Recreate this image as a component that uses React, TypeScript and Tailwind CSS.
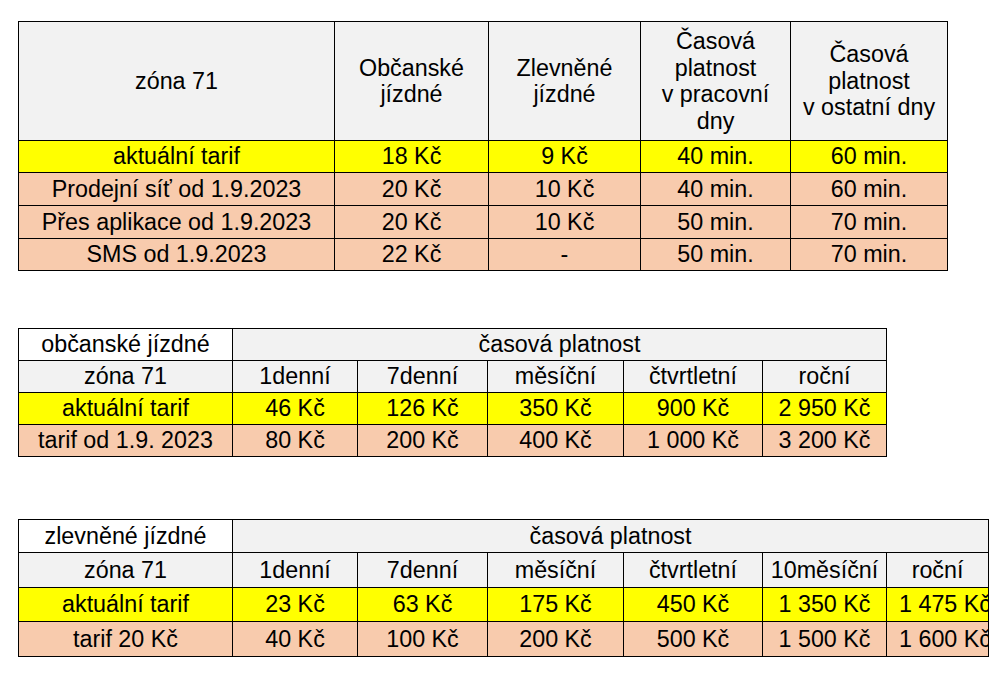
import React from "react";

const Y = "bg-[#ffff00]";
const P = "bg-[#f8cbad]";
const G = "bg-[#f2f2f2]";
const W = "bg-white";

const td = "border border-black text-center align-middle p-0 whitespace-nowrap";

export default function App() {
  return (
    <div
      className="w-[1000px] h-[692px] bg-white text-black text-[23.3px] leading-[26.5px] pl-[18px] pt-[21px]"
      style={{ fontFamily: '"Liberation Sans", Arial, sans-serif' }}
    >
      <table className="table-fixed border-collapse w-[929px]">
        <colgroup>
          <col className="w-[316px]" />
          <col className="w-[154px]" />
          <col className="w-[152px]" />
          <col className="w-[150px]" />
          <col className="w-[157px]" />
        </colgroup>
        <tbody>
          <tr className={`h-[119px] ${G}`}>
            <td className={td}>zóna 71</td>
            <td className={td}>
              Občanské
              <br />
              jízdné
            </td>
            <td className={td}>
              Zlevněné
              <br />
              jízdné
            </td>
            <td className={td}>
              Časová
              <br />
              platnost
              <br />v pracovní
              <br />
              dny
            </td>
            <td className={td}>
              Časová
              <br />
              platnost
              <br />v ostatní dny
            </td>
          </tr>
          <tr className={`h-[32px] ${Y}`}>
            <td className={td}>aktuální tarif</td>
            <td className={td}>18 Kč</td>
            <td className={td}>9 Kč</td>
            <td className={td}>40 min.</td>
            <td className={td}>60 min.</td>
          </tr>
          <tr className={`h-[33px] ${P}`}>
            <td className={td}>Prodejní síť od 1.9.2023</td>
            <td className={td}>20 Kč</td>
            <td className={td}>10 Kč</td>
            <td className={td}>40 min.</td>
            <td className={td}>60 min.</td>
          </tr>
          <tr className={`h-[33px] ${P}`}>
            <td className={td}>Přes aplikace od 1.9.2023</td>
            <td className={td}>20 Kč</td>
            <td className={td}>10 Kč</td>
            <td className={td}>50 min.</td>
            <td className={td}>70 min.</td>
          </tr>
          <tr className={`h-[32px] ${P}`}>
            <td className={td}>SMS od 1.9.2023</td>
            <td className={td}>22 Kč</td>
            <td className={td}>-</td>
            <td className={td}>50 min.</td>
            <td className={td}>70 min.</td>
          </tr>
        </tbody>
      </table>

      <table className="table-fixed border-collapse w-[868px] mt-[57px]">
        <colgroup>
          <col className="w-[214px]" />
          <col className="w-[125px]" />
          <col className="w-[130px]" />
          <col className="w-[136px]" />
          <col className="w-[139px]" />
          <col className="w-[124px]" />
        </colgroup>
        <tbody>
          <tr className="h-[32px]">
            <td className={`${td} ${W}`}>občanské jízdné</td>
            <td className={`${td} ${G}`} colSpan={5}>
              časová platnost
            </td>
          </tr>
          <tr className={`h-[32px] ${G}`}>
            <td className={td}>zóna 71</td>
            <td className={td}>1denní</td>
            <td className={td}>7denní</td>
            <td className={td}>měsíční</td>
            <td className={td}>čtvrtletní</td>
            <td className={td}>roční</td>
          </tr>
          <tr className={`h-[32px] ${Y}`}>
            <td className={td}>aktuální tarif</td>
            <td className={td}>46 Kč</td>
            <td className={td}>126 Kč</td>
            <td className={td}>350 Kč</td>
            <td className={td}>900 Kč</td>
            <td className={td}>2 950 Kč</td>
          </tr>
          <tr className={`h-[32px] ${P}`}>
            <td className={td}>tarif od 1.9. 2023</td>
            <td className={td}>80 Kč</td>
            <td className={td}>200 Kč</td>
            <td className={td}>400 Kč</td>
            <td className={td}>1 000 Kč</td>
            <td className={td}>3 200 Kč</td>
          </tr>
        </tbody>
      </table>

      <table className="table-fixed border-collapse w-[970px] mt-[62px]">
        <colgroup>
          <col className="w-[214px]" />
          <col className="w-[125px]" />
          <col className="w-[130px]" />
          <col className="w-[136px]" />
          <col className="w-[139px]" />
          <col className="w-[124px]" />
          <col className="w-[102px]" />
        </colgroup>
        <tbody>
          <tr className="h-[33px]">
            <td className={`${td} ${W}`}>zlevněné jízdné</td>
            <td className={`${td} ${G}`} colSpan={6}>
              časová platnost
            </td>
          </tr>
          <tr className={`h-[35px] ${G}`}>
            <td className={td}>zóna 71</td>
            <td className={td}>1denní</td>
            <td className={td}>7denní</td>
            <td className={td}>měsíční</td>
            <td className={td}>čtvrtletní</td>
            <td className={td}>10měsíční</td>
            <td className={td}>roční</td>
          </tr>
          <tr className={`h-[34px] ${Y}`}>
            <td className={td}>aktuální tarif</td>
            <td className={td}>23 Kč</td>
            <td className={td}>63 Kč</td>
            <td className={td}>175 Kč</td>
            <td className={td}>450 Kč</td>
            <td className={td}>1 350 Kč</td>
            <td className={`${td} overflow-hidden text-left pl-[12px]`}>1 475 Kč</td>
          </tr>
          <tr className={`h-[35px] ${P}`}>
            <td className={td}>tarif 20 Kč</td>
            <td className={td}>40 Kč</td>
            <td className={td}>100 Kč</td>
            <td className={td}>200 Kč</td>
            <td className={td}>500 Kč</td>
            <td className={td}>1 500 Kč</td>
            <td className={`${td} overflow-hidden text-left pl-[12px]`}>1 600 Kč</td>
          </tr>
        </tbody>
      </table>
    </div>
  );
}
